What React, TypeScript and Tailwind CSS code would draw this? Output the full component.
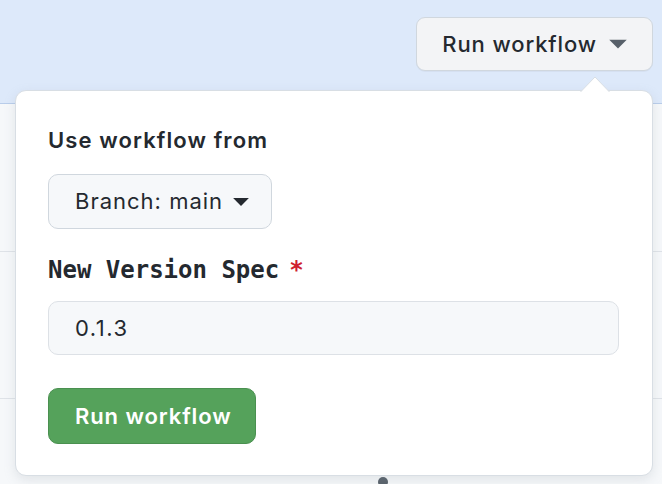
import { useState } from 'react'

function Caret({ className }: { className: string }) {
  return (
    <svg viewBox="0 0 16 16" className={className} fill="currentColor" aria-hidden="true">
      <path d="M1 4.5h14L8 11.5z" />
    </svg>
  )
}

export default function App() {
  const [version, setVersion] = useState('0.1.3')

  return (
    <div
      className="relative h-[484px] w-[662px] overflow-hidden bg-[#f6f8fa] text-[#24292f]"
      style={{ fontFamily: 'Inter, "Noto Sans", sans-serif' }}
    >
      {/* header band */}
      <div className="flex h-[104px] justify-end border-b border-[#b9cdea] bg-[#dde9fa] pr-[9px] pt-[17px]">
        <button className="flex h-[54px] items-center gap-[11px] rounded-[9px] border border-[#d0d7de] bg-[#f3f4f6] pl-[25px] pr-[24px] text-[22px] font-medium tracking-[0.9px] text-[#24292f] shadow-[0_1px_0_rgba(27,31,36,0.04)]">
          Run workflow
          <Caret className="h-[20px] w-[20px] text-[#57606a]" />
        </button>
      </div>

      {/* list rows behind the popover */}
      <div className="h-[148px] border-b border-[#dfe3e8]" />
      <div className="h-[147px] border-b border-[#dfe3e8]" />
      <div className="h-[84px]">
        <div className="ml-[378px] mt-[78px] h-[10px] w-[10px] rounded-full bg-[#57606a]" />
      </div>

      {/* popover */}
      <div className="absolute left-[15px] top-[90px] w-[638px] rounded-[11px] border border-[#d8dee4] bg-white px-[32px] pb-[31px] pt-[35px] shadow-[0_4px_12px_rgba(140,149,159,0.2)]">
        <svg
          className="absolute right-[42px] top-[-15px]"
          width="30"
          height="16"
          viewBox="0 0 30 16"
          aria-hidden="true"
        >
          <path d="M0.5 16 L15 1 L29.5 16" fill="#ffffff" stroke="#d8dee4" strokeWidth="1" />
        </svg>

        <div className="text-[22px] font-semibold leading-[28px] tracking-[1.1px]">Use workflow from</div>

        <button className="mt-[20px] flex h-[55px] items-center gap-[9px] rounded-[10px] border border-[#d0d7de] bg-[#f6f8fa] pl-[26px] pr-[21px] text-[22px] tracking-[1px] text-[#24292f]">
          Branch: main
          <Caret className="h-[18px] w-[18px] text-[#24292f]" />
        </button>

        <div
          className="mt-[26px] flex items-center gap-[10px] text-[24px] font-bold leading-[30px]"
          style={{ fontFamily: '"DejaVu Sans Mono", "Liberation Mono", monospace' }}
        >
          New Version Spec
          <span className="text-[#cf222e]">*</span>
        </div>

        <input
          value={version}
          onChange={(e) => setVersion(e.target.value)}
          className="mt-[16px] block h-[54px] w-[571px] rounded-[10px] border border-[#dde1e6] bg-[#f6f8fa] px-[26px] text-[22px] tracking-[1.5px] text-[#24292f] outline-none"
        />

        <button className="mt-[33px] flex h-[56px] items-center rounded-[10px] border border-[#4a9050] bg-[#55a25b] pl-[26px] pr-[23px] text-[22px] font-semibold tracking-[0.9px] text-white">
          Run workflow
        </button>
      </div>
    </div>
  )
}
